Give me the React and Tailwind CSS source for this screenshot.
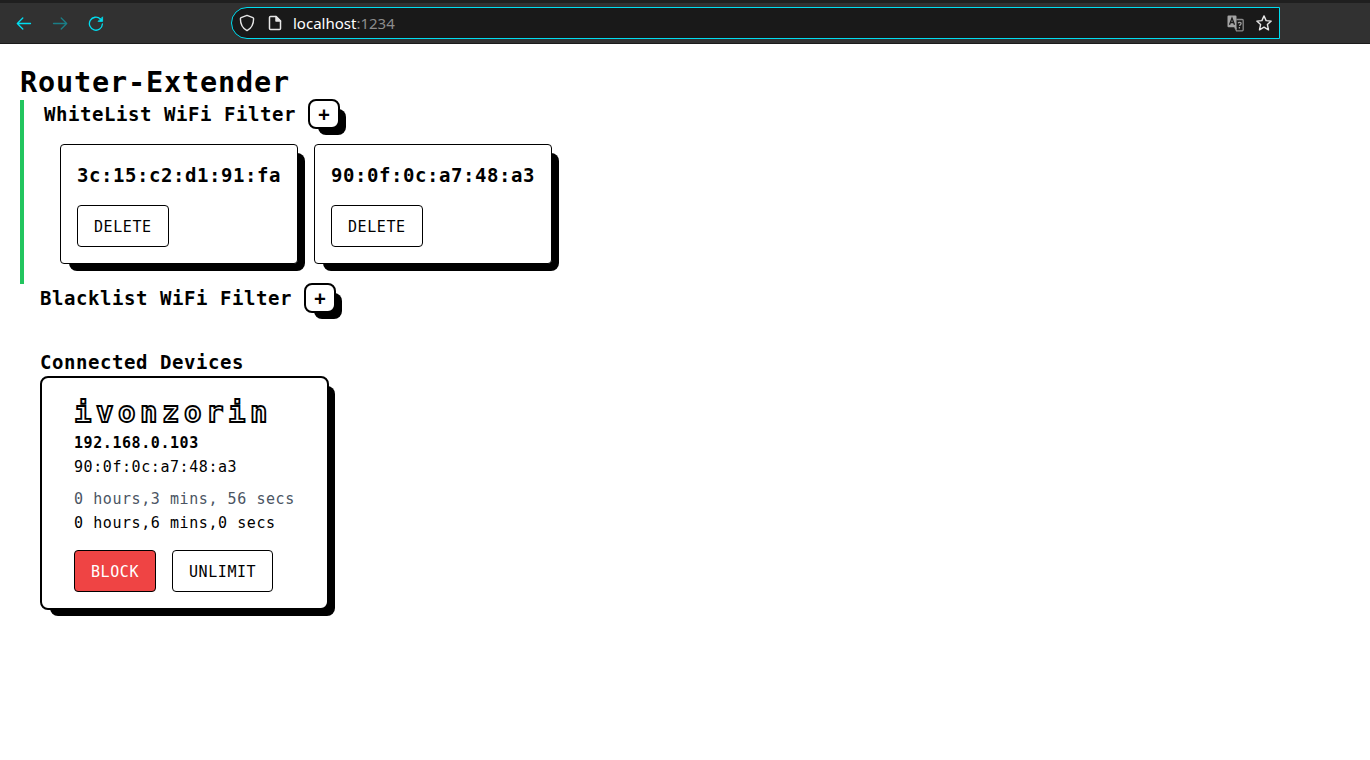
function BrowserBar() {
  return (
    <header className="flex h-11 items-center border-t-[3px] border-b border-t-[#1f1f1f] border-b-[#1b1b1b] bg-[#313131]">
      <div className="flex h-full w-[231px] shrink-0 items-center gap-5 pl-4 text-[#00ddf0]">
        <svg width="16" height="16" viewBox="0 0 16 16" fill="none" stroke="currentColor" strokeWidth="1.3" strokeLinecap="round" strokeLinejoin="round">
          <path d="M14.5 8.5H1.5M6.8 3L1.3 8.5l5.5 5.5" />
        </svg>
        <svg className="opacity-45" width="16" height="16" viewBox="0 0 16 16" fill="none" stroke="currentColor" strokeWidth="1.3" strokeLinecap="round" strokeLinejoin="round">
          <path d="M1.5 8.5h13M9.2 3L14.7 8.5l-5.5 5.5" />
        </svg>
        <svg width="16" height="16" viewBox="0 0 16 16" fill="none" stroke="currentColor" strokeWidth="1.3" strokeLinecap="round">
          <path d="M14.4 9A6.5 6.5 0 1 1 12.4 4" />
          <path d="M14.6 2.2v4.2H10.4z" fill="currentColor" strokeWidth="0.8" strokeLinejoin="round" />
        </svg>
      </div>
      <div className="flex h-8 w-[1049px] shrink-0 items-center rounded-l-full border border-[#00ddf0] bg-[#191919] pl-[7px] pr-[7px] text-[#e6e6e6]">
        <svg width="16" height="18" viewBox="0 0 16 18" fill="none" stroke="currentColor" strokeWidth="1.4" strokeLinejoin="round">
          <path d="M8 1.4l5.900 2.300c.5.200.7.500.7 1 0 5.200-1.700 9.300-6.600 11.900C3.100 14 1.400 9.900 1.400 4.700c0-.5.200-.8.700-1z" />
        </svg>
        <svg className="ml-3" width="16" height="16" viewBox="0 0 16 16" fill="none" stroke="currentColor" strokeWidth="1.5" strokeLinejoin="round">
          <path d="M3.500 1.500h5.500l4.500 4.500v7.500a1 1 0 0 1-1 1h-9a1 1 0 0 1-1-1v-11a1 1 0 0 1 1-1z" />
          <path d="M9 1.500v4.500h4.500z" fill="currentColor" />
        </svg>
        <span className="ml-[10px] font-['Noto_Sans',sans-serif] text-[15px] leading-5 text-white">
          localhost<span className="text-[#8c8c8c]">:1234</span>
        </span>
        <div className="ml-auto flex items-center gap-3">
          <svg width="17" height="17" viewBox="0 0 17 17">
            <path d="M9.5 4.5h5.700a1 1 0 0 1 1 1v9.300a1 1 0 0 1-1 1H9.500l-1.500-3" fill="none" stroke="#8a8a8a" strokeWidth="1.3" />
            <path d="M1.500.5h7a1 1 0 0 1 1 1v10.300l.4 3-2.900-2.500H1.500a1 1 0 0 1-1-1V1.500a1 1 0 0 1 1-1z" fill="#a3a3a3" />
            <path d="M2.500 9.700L5 3l2.500 6.700M3.400 7.500h3.200" fill="none" stroke="#191919" strokeWidth="1.3" />
            <path d="M11.200 8.300c.5-1.500 3-1.200 2.900.2 0 1-1.500 1.300-1.600 2.400M12.400 12.100v1.300" fill="none" stroke="#a0a0a0" strokeWidth="1.3" />
          </svg>
          <svg width="16" height="16" viewBox="0 0 16 16" fill="none" stroke="currentColor" strokeWidth="1.4" strokeLinejoin="round">
            <path d="M8 .9l2.100 4.700 5.100.5-3.800 3.500 1.100 5.200L8 12.200l-4.500 2.600 1.100-5.200L.8 6.100l5.100-.5z" />
          </svg>
        </div>
      </div>
    </header>
  );
}

function AddButton() {
  return (
    <div className="relative isolate ml-3 before:absolute before:-bottom-1.5 before:-right-1.5 before:left-2.5 before:top-2.5 before:-z-10 before:rounded-lg before:bg-black">
      <button className="flex h-[30px] w-8 items-center justify-center rounded-lg border-2 border-black bg-white text-[19px] font-bold leading-none">
        +
      </button>
    </div>
  );
}

function FilterHeading({ children }) {
  return (
    <div className="flex h-7 items-center">
      <h2 className="text-[19px] font-bold leading-7 tracking-[0.56px]">{children}</h2>
      <AddButton />
    </div>
  );
}

function Button({ children, className }) {
  return (
    <button className={`h-[42px] rounded border border-black px-4 pt-0.5 text-[15px] leading-6 tracking-[0.57px] ${className}`}>
      {children}
    </button>
  );
}

function AddressCard({ address }) {
  return (
    <div className="relative isolate w-[238px] before:absolute before:-bottom-[7px] before:-right-[7px] before:left-[9px] before:top-[9px] before:-z-10 before:rounded-lg before:bg-black">
      <div className="rounded border border-black bg-white p-4">
        <h3 className="whitespace-nowrap text-[19px] font-bold leading-7 tracking-[0.56px]">{address}</h3>
        <Button className="mt-4 block">DELETE</Button>
      </div>
    </div>
  );
}

function DeviceCard() {
  return (
    <div className="relative isolate w-[289px] before:absolute before:-bottom-1.5 before:-right-1.5 before:left-2.5 before:top-2.5 before:-z-10 before:rounded-lg before:bg-black">
      <div className="whitespace-nowrap rounded-lg border-2 border-black bg-white px-8 py-4 text-[15px] leading-6 tracking-[0.57px]">
        <h3 className="mb-px text-[29px] font-bold leading-9 tracking-[4.54px] text-white [-webkit-text-stroke:1.8px_#000]">ivonzorin</h3>
        <p className="font-bold">192.168.0.103</p>
        <p>90:0f:0c:a7:48:a3</p>
        <p className="mt-2 text-[#4b5563]">0 hours,3 mins, 56 secs</p>
        <p>0 hours,6 mins,0 secs</p>
        <div className="mt-[15px] flex gap-4">
          <Button className="bg-[#ef4444] text-white">BLOCK</Button>
          <Button className="bg-white">UNLIMIT</Button>
        </div>
      </div>
    </div>
  );
}

export default function App() {
  return (
    <div className="h-[760px] overflow-hidden bg-white font-['DejaVu_Sans_Mono',monospace] text-black">
      <BrowserBar />
      <main className="p-5">
        <h1 className="h-9 text-[28.5px] font-bold leading-[38px] tracking-[0.84px]">Router-Extender</h1>
        <section className="h-[184px] border-l-4 border-[#22c55e] pl-5">
          <FilterHeading>WhiteList WiFi Filter</FilterHeading>
          <div className="mt-4 flex gap-4 pl-4">
            <AddressCard address="3c:15:c2:d1:91:fa" />
            <AddressCard address="90:0f:0c:a7:48:a3" />
          </div>
        </section>
        <section className="h-16 pl-5">
          <FilterHeading>Blacklist WiFi Filter</FilterHeading>
        </section>
        <section className="pl-5">
          <h2 className="text-[19px] font-bold leading-7 tracking-[0.56px]">Connected Devices</h2>
          <DeviceCard />
        </section>
      </main>
    </div>
  );
}
